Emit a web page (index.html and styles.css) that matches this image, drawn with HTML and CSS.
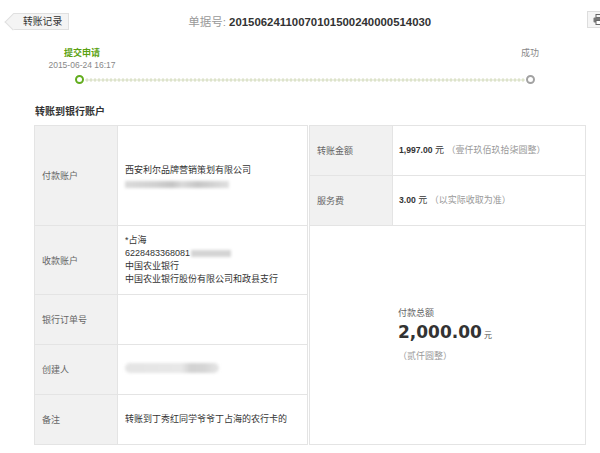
FILE: index.html
```html
<!DOCTYPE html>
<html lang="zh-CN">
<head>
    <meta charset="UTF-8">
    <meta name="viewport" content="width=device-width, initial-scale=1.0">
    <title>转账详情</title>
    <link rel="stylesheet" href="styles.css">
</head>
<body>
    <div class="page">
        <div class="header">
            <a class="back" href="javascript:;">转账记录</a>
            <div class="bill">单据号: <b>20150624110070101500240000514030</b></div>
            <a class="print" href="javascript:;" title="打印">
                <svg width="12" height="11" viewBox="0 0 12 11">
                    <rect x="3" y="0.5" width="6" height="3" fill="none" stroke="#666"/>
                    <rect x="0.5" y="3.5" width="11" height="5" rx="1" fill="#777"/>
                    <rect x="3" y="6.5" width="6" height="4" fill="#fff" stroke="#666"/>
                </svg>
            </a>
        </div>

        <div class="timeline">
            <div class="steps">
                <div class="step first">
                    <p class="name">提交申请</p>
                    <p class="time">2015-06-24 16:17</p>
                </div>
                <div class="step last">
                    <p class="name">成功</p>
                </div>
            </div>
            <div class="track">
                <i class="dot on"></i>
                <span class="line"></span>
                <i class="dot"></i>
            </div>
        </div>

        <h3 class="title">转账到银行账户</h3>

        <div class="detail">
            <table class="info left">
                <tr class="h100">
                    <td class="label">付款账户</td>
                    <td class="value">
                        <p>西安利尔品牌营销策划有限公司</p>
                        <span class="blur wide"></span>
                    </td>
                </tr>
                <tr class="h69">
                    <td class="label">收款账户</td>
                    <td class="value lines">
                        <p>*占海</p>
                        <p class="num">6228483368081<span class="blur short"></span></p>
                        <p>中国农业银行</p>
                        <p>中国农业银行股份有限公司和政县支行</p>
                    </td>
                </tr>
                <tr class="h50">
                    <td class="label">银行订单号</td>
                    <td class="value"></td>
                </tr>
                <tr class="h50">
                    <td class="label">创建人</td>
                    <td class="value"><span class="blur pill"></span></td>
                </tr>
                <tr class="h50">
                    <td class="label">备注</td>
                    <td class="value">转账到丁秀红同学爷爷丁占海的农行卡的</td>
                </tr>
            </table>

            <table class="info right">
                <tr class="h50">
                    <td class="label">转账金额</td>
                    <td class="value"><b class="money">1,997.00</b> 元 <span class="gray">（壹仟玖佰玖拾柒圆整）</span></td>
                </tr>
                <tr class="h50">
                    <td class="label">服务费</td>
                    <td class="value"><b class="money">3.00</b> 元 <span class="gray">（以实际收取为准）</span></td>
                </tr>
                <tr class="h219">
                    <td class="total" colspan="2">
                        <p class="total-label">付款总额</p>
                        <p class="total-amount"><strong>2,000.00</strong><em>元</em></p>
                        <p class="gray">（贰仟圆整）</p>
                    </td>
                </tr>
            </table>
        </div>
    </div>
</body>
</html>
```

FILE: styles.css
```css
* {
    padding: 0;
    margin: 0;
    box-sizing: border-box;
}

html,
body {
    width: 600px;
    height: 453px;
    overflow: hidden;
    background: #fff;
}

body {
    font-family: "Liberation Sans", "Noto Sans CJK SC", sans-serif;
    color: #333;
}

.page {
    width: 640px;
}

/* header */
.header {
    display: flex;
    align-items: center;
    height: 18px;
    margin-top: 12px;
}

.back {
    position: relative;
    display: block;
    height: 17px;
    line-height: 15px;
    margin-left: 13px;
    padding: 0 6px 0 10px;
    font-size: 9.8px;
    color: #333;
    text-decoration: none;
    background: #f4f4f4;
    border: 1px solid #e0e0e0;
    border-left: none;
}

.back::before {
    content: "";
    position: absolute;
    left: -6px;
    top: 2px;
    width: 11px;
    height: 11px;
    background: #f4f4f4;
    border-left: 1px solid #e0e0e0;
    border-bottom: 1px solid #e0e0e0;
    transform: rotate(45deg);
}

.bill {
    margin-left: 119px;
    font-size: 11.5px;
    color: #999;
}

.bill b {
    font-size: 11.4px;
    color: #333;
}

.print {
    display: flex;
    align-items: center;
    width: 30px;
    height: 17px;
    margin-left: auto;
    margin-right: 23px;
    padding-left: 5px;
    background: #f5f5f5;
    border: 1px solid #ddd;
    position: relative;
    top: -2px;
}

/* timeline */
.timeline {
    margin: 18px 0 0 42px;
}

.steps {
    display: flex;
    justify-content: space-between;
    width: 508px;
}

.step {
    text-align: center;
    font-size: 9px;
}

.step.first {
    width: 80px;
}

.step.last {
    width: 40px;
}

.step .name {
    line-height: 11px;
    color: #888;
}

.step.first .name {
    font-weight: bold;
    color: #5aa10f;
}

.step .time {
    font-size: 8.5px;
    line-height: 12px;
    color: #888;
}

.track {
    display: flex;
    align-items: center;
    width: 460px;
    height: 9px;
    margin: 4px 0 0 33px;
}

.dot {
    flex: none;
    width: 9px;
    height: 9px;
    border-radius: 50%;
    border: 2px solid #a2a2a2;
    background: #fff;
}

.dot.on {
    border: 2.5px solid #62ad1e;
}

.line {
    flex: 1;
    height: 4px;
    margin: 0 1px;
    background: radial-gradient(circle, #dde3cb 1.4px, transparent 1.8px) 0 0 / 4px 4px repeat-x;
}

/* table */
.title {
    margin: 22px 0 7px 35px;
    font-size: 10px;
    line-height: 12px;
    font-weight: bold;
    color: #333;
}

.detail {
    display: flex;
    gap: 1px;
    margin-left: 34px;
}

.info {
    border-collapse: collapse;
    table-layout: fixed;
}

.info.left {
    width: 274px;
}

.info.right {
    width: 277px;
}

.info td {
    border: 1px solid #e4e4e4;
    font-size: 9px;
    vertical-align: middle;
}

.info td.label {
    width: 83px;
    padding-left: 7px;
    color: #666;
    background: #f1f1f1;
}

.info td.value {
    padding-left: 7px;
    line-height: 13px;
    color: #333;
}

.info.right td.value {
    padding-left: 6px;
}

.h100 { height: 100px; }
.h69 { height: 69px; }
.h50 { height: 50px; }
.h219 { height: 219px; }

.blur {
    display: inline-block;
    background: #d4d4d4;
    filter: blur(1.4px);
}

.blur.wide {
    display: block;
    width: 104px;
    height: 7px;
    margin-top: 4px;
    background: linear-gradient(90deg, #dadada 0, #d0d0d0 30%, #c4c4c4 45%, #dadada 55%, #c6c6c6 70%, #e0e0e0 100%);
}

.blur.short {
    width: 40px;
    height: 7px;
    margin-left: 1px;
    vertical-align: -1px;
}

.blur.pill {
    width: 94px;
    height: 10px;
    border-radius: 5px;
    background: linear-gradient(90deg, #e4e4e4 0, #e8e8e8 60%, #d2d2d2 70%, #d6d6d6 85%, #e6e6e6 100%);
}

.money {
    font-size: 8.6px;
}

.gray {
    color: #999;
}

.total {
    padding-left: 88px;
    vertical-align: middle;
}

.total-label {
    line-height: 12px;
    color: #666;
}

.total-amount {
    line-height: 26px;
}

.total-amount strong {
    font-family: "DejaVu Sans", sans-serif;
    font-size: 17px;
    color: #333;
}

.total-amount em {
    font-style: normal;
    font-size: 8px;
    margin-left: 2px;
    color: #555;
}

.total .gray {
    line-height: 14px;
}
```
